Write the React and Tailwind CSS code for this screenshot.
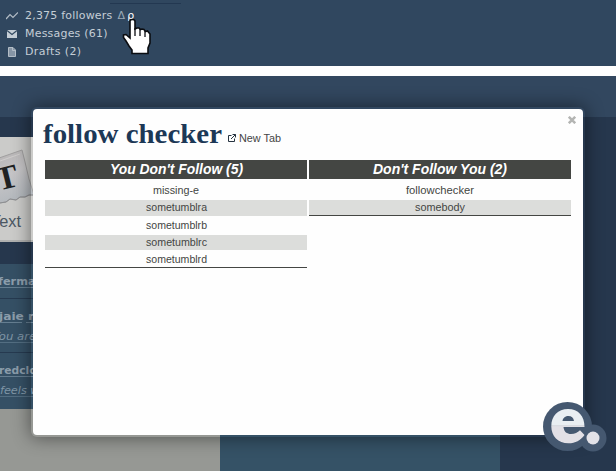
import React from "react";

const verdana = "font-['DejaVu_Sans',Verdana,sans-serif]";

function ActivityText({ children, x, y, width, bold, underlines = [[0, 220]] }) {
  return (
    <svg className="block h-[18px] w-full overflow-visible">
      <text
        x={x}
        y={y}
        textLength={width}
        lengthAdjust="spacingAndGlyphs"
        fontSize="11"
        fill={bold ? "#8c9dab" : "#7f95a5"}
        fontWeight={bold ? "700" : "400"}
        fontStyle={bold ? "normal" : "italic"}
        fontFamily="DejaVu Sans, sans-serif"
      >
        {children}
      </text>
      {underlines.map(([from, to]) => (
        <path key={from} d={`M${from} ${y + 2.5}H${to}`} stroke={bold ? "#657e91" : "#536e82"} />
      ))}
    </svg>
  );
}

function AccountMenu() {
  return (
    <section className={`relative h-[66px] bg-[#30475f] pt-[7px] text-[11px] tracking-[0.2px] text-[#c5ced6] ${verdana}`}>
      <div className="absolute left-[110px] top-[3px] h-px w-[71px] bg-[#233851]" />
      <div className="flex h-[18px] items-center pl-[6px]">
        <svg className="mr-[7px] h-[10px] w-[12px]" viewBox="0 0 12 10" fill="none" stroke="#b3bdc6" strokeWidth="1.2">
          <path d="M0 8 L4 3.500 L7 6.500 L12 1.500" />
        </svg>
        <span className="whitespace-nowrap">2,375 followers</span>
        <span className="ml-[5px] text-[#9aa9b6]">Δ</span>
        <span className="ml-[2px] text-white">ρ</span>
      </div>
      <div className="flex h-[18px] items-center pl-[7px]">
        <svg className="mr-[8px] h-[8px] w-[10px]" viewBox="0 0 10 8">
          <rect width="10" height="8" fill="#c5ced6" />
          <path d="M0 .5 L5 4.500 L10 .5" fill="none" stroke="#30475f" strokeWidth="1.2" />
        </svg>
        <span>Messages (61)</span>
      </div>
      <div className="flex h-[18px] items-center pl-[8px]">
        <svg className="mr-[9px] h-[10px] w-[8px]" viewBox="0 0 8 10">
          <path d="M.5.5H5L7.500 3V9.500H.5Z" fill="#8695a5" stroke="#b3bdc6" />
          <path d="M4.500 .5V3.500H7.500" fill="none" stroke="#b3bdc6" />
        </svg>
        <span className="tracking-[0.4px]">Drafts (2)</span>
      </div>
      <svg className="absolute left-[122px] top-[18px] h-[37px] w-[30px]" viewBox="0 0 30 37">
        <path d="M8 3Q8 1.500 10.500 1.500T13 3.500V11L15 10H17L18.500 11.500L20 11L22 11.500L23.500 13.500L25.500 13L28 16V25L26 30V35.500H10V32L7 28L4 23L1.500 19.500V17L4 16.500L8 20Z" fill="#fff" stroke="#0b0d11" strokeWidth="1.6" />
        <path d="M13 10V18M18 11V18M23 13V19" stroke="#0b0d11" strokeWidth="1.3" />
      </svg>
    </section>
  );
}

function TextPostTile() {
  return (
    <svg className="block h-[105px] w-[220px] bg-[#cbcbc9]" viewBox="0 0 220 105">
      <defs>
        <linearGradient id="paper" x1="0" y1="0" x2="0.3" y2="1">
          <stop offset="0" stopColor="#b5b2b2" />
          <stop offset=".5" stopColor="#c6c5c7" />
          <stop offset="1" stopColor="#b3b8bd" />
        </linearGradient>
      </defs>
      <path d="M-1 21L22 13L25 25L29 42L34 58L29 58L25 60L20 60L16 63L10 62L6 65L-1 66Z" fill="url(#paper)" stroke="#a09f9f" />
      <path d="M0 24L20 17" stroke="#cfcdcc" />
      <path d="M0 66L6 65L10 62L16 63L20 60L25 60L29 58L34 58" fill="none" stroke="#8d8f92" />
      <text x="-1.500" y="51" fontFamily="Liberation Serif, serif" fontSize="33" fontWeight="700" fill="#202122" transform="rotate(-14 10 51)">T</text>
      <text x="-9" y="90" textLength="30" lengthAdjust="spacingAndGlyphs" fontFamily="Liberation Sans, sans-serif" fontSize="17" fill="#4b5763">Text</text>
      <path d="M0 104H220" stroke="#b0b1b0" strokeWidth="2" />
    </svg>
  );
}

function Activity() {
  return (
    <div className="h-[145px] w-[220px] bg-[#355065]">
      <div className="h-[35px] border-b border-[#263a50] pt-[8px]">
        <ActivityText x={-2} y={13} width={43} bold>fermat</ActivityText>
      </div>
      <div className="h-[54px] border-b border-[#263a50] pt-[8px]">
        <ActivityText x={-1} y={13} width={52} bold underlines={[[0, 22], [26, 60]]}>jaie reb</ActivityText>
        <div className="pt-[2px]">
          <ActivityText x={-7} y={13} width={60}>You are so</ActivityText>
        </div>
      </div>
      <div className="pt-[8px]">
        <ActivityText x={-1} y={13} width={53} bold>redcloud</ActivityText>
        <div className="pt-[2px]">
          <ActivityText x={0} y={13} width={62}>feels warm</ActivityText>
        </div>
      </div>
    </div>
  );
}

function FollowList({ title, titleWidth, names }) {
  return (
    <div className="w-[262px] border-b border-[#444643]">
      <div className="flex h-[19px] justify-center bg-[#444643]">
        <svg className="h-[19px] overflow-visible" width={titleWidth}>
          <text x="0" y="14" textLength={titleWidth} lengthAdjust="spacingAndGlyphs" fill="white" fontFamily="Liberation Sans, sans-serif" fontSize="14" fontWeight="700" fontStyle="italic">{title}</text>
        </svg>
      </div>
      <div className="pt-[3px]">
        {names.map(({ name, width, height, baseline, shaded }) => (
          <div key={name} className={`flex justify-center ${height} ${shaded ? "bg-[#dcdddb]" : ""}`}>
            <svg className="h-full overflow-visible" width={width}>
              <text x="0" y={baseline} textLength={width} lengthAdjust="spacingAndGlyphs" fill="#444643" fontFamily="Liberation Sans, sans-serif" fontSize="11">{name}</text>
            </svg>
          </div>
        ))}
      </div>
    </div>
  );
}

const unreciprocated = [
  { name: "missing-e", width: 46, height: "h-[18px]", baseline: 12 },
  { name: "sometumblra", width: 61, height: "h-[16px]", baseline: 11, shaded: true },
  { name: "sometumblrb", width: 61, height: "h-[19px]", baseline: 13 },
  { name: "sometumblrc", width: 61, height: "h-[15px]", baseline: 11, shaded: true },
  { name: "sometumblrd", width: 61, height: "h-[17px]", baseline: 13 },
];
const unfollowed = [
  { name: "followchecker", width: 68, height: "h-[18px]", baseline: 12 },
  { name: "somebody", width: 50, height: "h-[15px]", baseline: 11, shaded: true },
];

function FollowChecker() {
  return (
    <section className="absolute left-[30px] top-[106px] h-[332px] w-[556px] rounded-[7px] border-[3px] border-transparent bg-[#fefefe] bg-clip-padding shadow-[0_0_18px_rgba(0,0,0,0.45)]">
      <header className="flex h-[51px] items-start justify-between">
        <div className="flex">
          <svg className="h-[51px] w-[190px] overflow-visible">
            <text x="10" y="33.500" textLength="179" lengthAdjust="spacingAndGlyphs" fontFamily="Georgia, Liberation Serif, serif" fontSize="27" fontWeight="700" fill="#1c3856">follow checker</text>
          </svg>
          <svg className="ml-[5px] mt-[25px] h-[8px] w-[8px]" viewBox="0 0 8 8" fill="none" stroke="#263340">
            <path d="M3.500 1.500H.5V7.500H6.500V4.500M3 5L7.500 .5M4.500 .5H7.500V3.500" />
          </svg>
          <svg className="h-[51px] w-[46px] overflow-visible">
            <text x="3" y="33" textLength="42" lengthAdjust="spacingAndGlyphs" fontFamily="Liberation Sans, sans-serif" fontSize="10" fill="#444">New Tab</text>
          </svg>
        </div>
        <svg className="mr-[7px] mt-[7px] h-[8px] w-[8px]" viewBox="0 0 8 8" stroke="#b4b5b3" strokeWidth="2.5">
          <path d="M.8.8L7.200 7.200M7.200.8L.8 7.200" />
        </svg>
      </header>
      <div className="flex items-start gap-[2px] pl-[12px]">
        <FollowList title="You Don't Follow (5)" titleWidth={133} names={unreciprocated} />
        <FollowList title="Don't Follow You (2)" titleWidth={134} names={unfollowed} />
      </div>
    </section>
  );
}

function Logo() {
  return (
    <svg className="absolute left-[543px] top-[401px] h-[52px] w-[65px]" viewBox="0 0 65 52">
      <g fill="#455870">
        <circle cx="24.500" cy="25.500" r="24.500" />
        <circle cx="50" cy="37" r="13.500" />
      </g>
      <defs>
        <linearGradient id="letterShade" x1="0" y1="8" x2="0" y2="42" gradientUnits="userSpaceOnUse">
          <stop offset=".47" stopColor="#e9eef2" />
          <stop offset=".47" stopColor="#d6d9df" />
          <stop offset=".53" stopColor="#e2e0e6" />
        </linearGradient>
      </defs>
      <path fillRule="evenodd" d="M25 8C35.500 8 41.500 15 41.500 26H20.500C21 31 24 33 28 33C32 33 34.500 31.500 37 29.300L41.500 34C37.500 39.500 32.500 42.300 25.500 42.300C15 42.300 8.300 35 8.300 25.300C8.300 15 15 8 25 8ZM19.500 20H31C30.500 16.500 28.500 15 25.500 15C22.500 15 20 16.500 19.500 20Z" fill="url(#letterShade)" />
      <circle cx="50" cy="37" r="6.500" fill="#e3e2e8" />
    </svg>
  );
}

export default function App() {
  return (
    <main className="relative h-[471px] w-[616px] overflow-hidden bg-[#fefefe]">
      <AccountMenu />
      <div className="h-[10px]" />
      <div className="h-[41px] bg-[#32475f]" />
      <div className="flex h-[354px] bg-[#26374d]">
        <aside className="w-[220px]">
          <div className="h-[20px]" />
          <TextPostTile />
          <div className="h-[22px]" />
          <Activity />
          <div className="h-[62px] bg-[#969894]" />
        </aside>
        <div className="w-[280px] bg-[#355266]" />
      </div>
      <FollowChecker />
      <Logo />
    </main>
  );
}
